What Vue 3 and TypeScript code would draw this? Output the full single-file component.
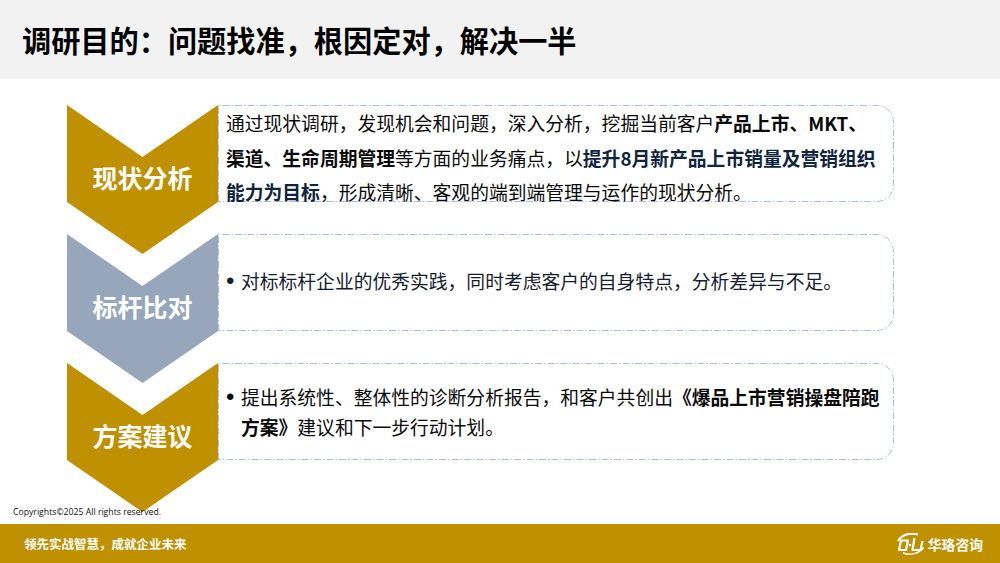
<script setup lang="ts">
interface Row { label: string; color: string }
const rows: Row[] = [
  { label: '现状分析', color: '#bf9000' },
  { label: '标杆比对', color: '#98a6bc' },
  { label: '方案建议', color: '#bf9000' },
]
</script>

<template>
  <div class="slide">
    <header class="head"><h1>调研目的：问题找准，根因定对，解决一半</h1></header>
    <main class="body">
      <section class="row">
        <div class="chev">
          <svg class="shape" width="151" height="149" viewBox="0 0 151 149"><polygon points="0,0 75.5,52 151,0 151,97 75.5,149 0,97" :fill="rows[0].color" /></svg>
          <span class="lab">{{ rows[0].label }}</span>
        </div>
        <div class="card first">
          <svg class="edge" width="676" height="97" viewBox="0 0 676 97" fill="none"><path d="M0.5 96.5 V0.5 H659 A16.5 16.5 0 0 1 675.5 17 V80 A16.5 16.5 0 0 1 659 96.5 H0.5 Z" /></svg>
          <p>通过现状调研，发现机会和问题，深入分析，挖掘当前客户<b>产品上市、MKT、渠道、生命周期管理</b>等方面的业务痛点，以<b class="navy">提升8月新产品上市销量及营销组织能力为目标</b>，形成清晰、客观的端到端管理与运作的现状分析。</p>
        </div>
      </section>
      <section class="row">
        <div class="chev">
          <svg class="shape" width="151" height="149" viewBox="0 0 151 149"><polygon points="0,0 75.5,52 151,0 151,97 75.5,149 0,97" :fill="rows[1].color" /></svg>
          <span class="lab">{{ rows[1].label }}</span>
        </div>
        <div class="card second">
          <svg class="edge" width="676" height="97" viewBox="0 0 676 97" fill="none"><path d="M0.5 96.5 V0.5 H659 A16.5 16.5 0 0 1 675.5 17 V80 A16.5 16.5 0 0 1 659 96.5 H0.5 Z" /></svg>
          <p class="bullet"><i>•</i><span>对标标杆企业的优秀实践，同时考虑客户的自身特点，分析差异与不足。</span></p>
        </div>
      </section>
      <section class="row">
        <div class="chev">
          <svg class="shape" width="151" height="149" viewBox="0 0 151 149"><polygon points="0,0 75.5,52 151,0 151,97 75.5,149 0,97" :fill="rows[2].color" /></svg>
          <span class="lab">{{ rows[2].label }}</span>
        </div>
        <div class="card">
          <svg class="edge" width="676" height="97" viewBox="0 0 676 97" fill="none"><path d="M0.5 96.5 V0.5 H659 A16.5 16.5 0 0 1 675.5 17 V80 A16.5 16.5 0 0 1 659 96.5 H0.5 Z" /></svg>
          <p class="bullet"><i>•</i><span>提出系统性、整体性的诊断分析报告，和客户共创出<b>《爆品上市营销操盘陪跑方案》</b>建议和下一步行动计划。</span></p>
        </div>
      </section>
    </main>
    <div class="copy">Copyrights©2025 All rights reserved.</div>
    <footer class="foot">
      <span class="slogan">领先实战智慧，成就企业未来</span>
      <span class="logo">
        <svg width="29" height="22" viewBox="0 0 29 22" fill="none" stroke="#fff">
          <path d="M4 7.5 H11 L9 17 H2 Z" stroke-width="2.2" stroke-linejoin="round" />
          <path d="M17.5 5 L15.5 17 H23.5 L25.5 8" stroke-width="2.2" stroke-linejoin="round" />
          <circle cx="13" cy="12" r="1.3" fill="#fff" stroke="none" />
          <path d="M1 8 C5 1.5 13 -0.5 21 1.5" stroke-width="2.2" />
          <path d="M6 20 C13 22.5 22 21 26.5 14.5" stroke-width="1.4" />
        </svg>
        <span class="brand">华珞咨询</span>
      </span>
    </footer>
  </div>
</template>

<style>
html, body { margin: 0; background: #fff; }
</style>

<style scoped>
.slide {
  position: relative;
  width: 1000px;
  height: 563px;
  display: flex;
  flex-direction: column;
  overflow: hidden;
  background: #fff;
  font-family: "Noto Sans CJK SC", "Noto Sans", sans-serif;
  color: #000;
}
.head {
  height: 79px;
  background: #f2f2f2;
  display: flex;
  align-items: center;
  padding-left: 22px;
  flex: none;
}
h1 { margin: 0; font-size: 29.2px; font-weight: 700; line-height: 1; color: #000; }
.body {
  flex: 1;
  display: flex;
  flex-direction: column;
  gap: 32px;
  padding: 26px 106px 0 67px;
}
.row { display: flex; height: 97px; }
.chev { position: relative; width: 151px; flex: none; }
.shape { position: absolute; left: 0; top: 0; display: block; }
.lab {
  position: absolute;
  left: 0;
  right: 0;
  top: 56px;
  text-align: center;
  font-size: 25px;
  line-height: 32px;
  font-weight: 700;
  color: #fff;
}
.card {
  position: relative;
  width: 676px;
  flex: none;
  box-sizing: border-box;
  display: flex;
  align-items: center;
  padding: 0 13px 0 8px;
}
.edge { position: absolute; left: 0; top: 0; pointer-events: none; }
.edge path { stroke: #a9c0e6; stroke-width: 1; stroke-dasharray: 7 2 1.5 2; }
.card p { margin: 0; font-size: 18.8px; line-height: 30px; color: #0a0a0a; position: relative; }
.card.first p { line-height: 34.5px; padding-top: 9px; }
.card.second p { color: #16202e; padding-bottom: 3px; }
.navy { color: #10243e; }
b { font-weight: 700; }
.bullet { display: flex; }
.bullet i { width: 15px; flex: none; font-style: normal; font-family: "Liberation Sans", sans-serif; font-size: 24px; }
.copy {
  position: absolute;
  left: 13px;
  top: 506px;
  font-family: "Open Sans", "Noto Sans", sans-serif;
  font-size: 8.7px;
  line-height: 13px;
  color: #111;
}
.foot {
  height: 39px;
  flex: none;
  background: #bf9000;
  display: flex;
  align-items: center;
  justify-content: space-between;
  padding: 0 17px 0 24px;
  color: #fff;
}
.slogan { font-size: 12.5px; font-weight: 700; }
.logo { display: flex; align-items: center; gap: 2px; }
.brand { font-size: 13.8px; font-weight: 700; }
</style>
